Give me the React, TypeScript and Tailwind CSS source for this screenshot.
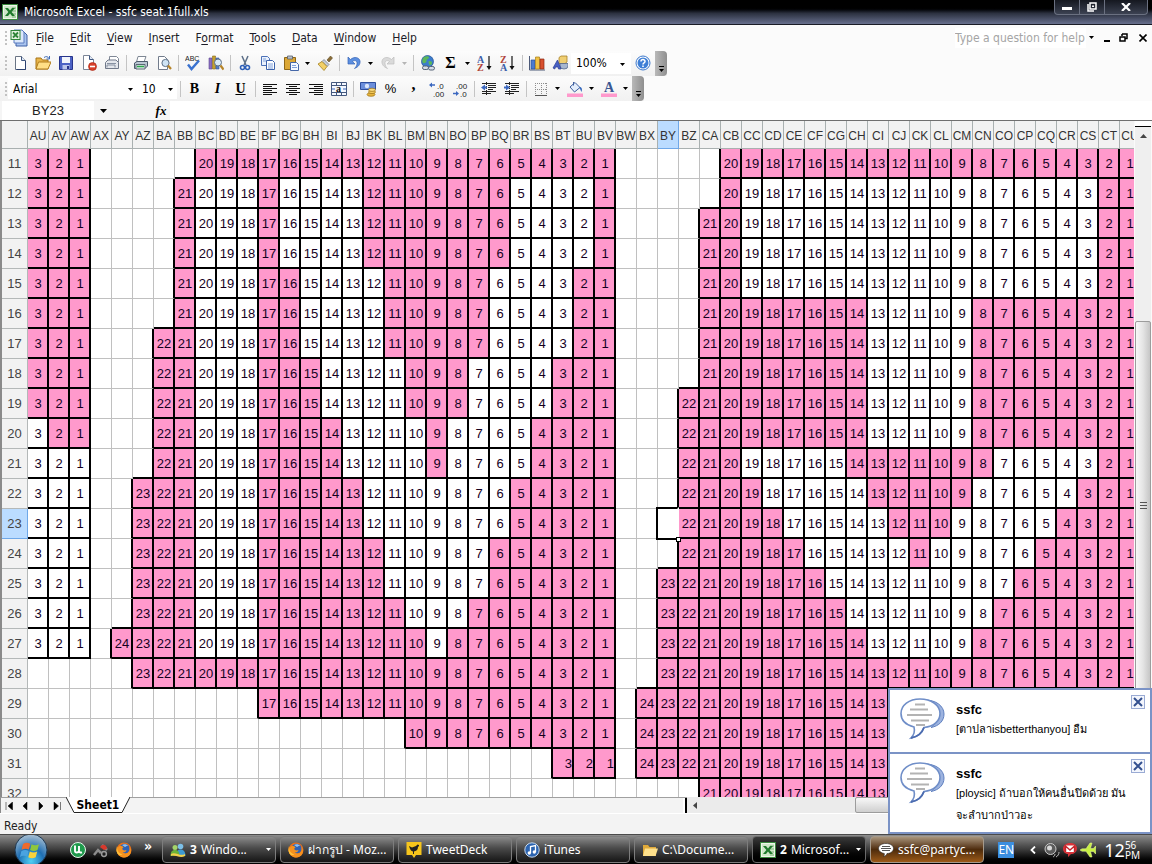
import type { ReactNode } from 'react';
import clsx from 'clsx';

const UI = "font-['DejaVu_Sans_Condensed','DejaVu_Sans','Noto_Sans',sans-serif]";

// ---------- sheet data ----------

const ALPHABET = 'ABCDEFGHIJKLMNOPQRSTUVWXYZ';

function columnName(n: number) {
  return ALPHABET[Math.floor(n / 26) - 1] + ALPHABET[n % 26];
}

// AU .. CU
const FIRST_COL = 46;
const COLUMNS = Array.from({ length: 53 }, (_, i) => columnName(FIRST_COL + i));

interface Block {
  max: number;
  free: [number, number][];
}

interface SeatRow {
  row: number;
  left: Block;
  middle: Block;
  right: Block;
}

const block = (max: number, ...free: [number, number][]): Block => ({ max, free });

const ROWS: SeatRow[] = [
  { row: 11, left: block(3), middle: block(20), right: block(20) },
  { row: 12, left: block(3), middle: block(21, [20, 18], [16, 13], [5, 2]), right: block(20, [19, 3]) },
  { row: 13, left: block(3), middle: block(21, [20, 18], [16, 13], [5, 2]), right: block(21, [19, 3]) },
  { row: 14, left: block(3), middle: block(21, [20, 18], [16, 13], [5, 2]), right: block(21, [19, 3]) },
  { row: 15, left: block(3), middle: block(21, [20, 18], [15, 12], [6, 3]), right: block(21, [19, 3]) },
  { row: 16, left: block(3), middle: block(21, [20, 18], [15, 12], [6, 3]), right: block(21, [13, 9]) },
  { row: 17, left: block(3), middle: block(22, [20, 18], [15, 12], [6, 3]), right: block(21, [13, 9]) },
  { row: 18, left: block(3), middle: block(22, [20, 18], [14, 11], [7, 4]), right: block(21, [13, 9]) },
  { row: 19, left: block(3), middle: block(22, [20, 18], [14, 11], [7, 4]), right: block(22, [13, 9]) },
  { row: 20, left: block(3, [3, 3]), middle: block(22, [20, 18], [13, 10], [8, 5]), right: block(22, [13, 9]) },
  { row: 21, left: block(3, [3, 1]), middle: block(22, [20, 18], [13, 10], [8, 5]), right: block(22, [19, 15], [7, 3]) },
  { row: 22, left: block(3, [3, 1]), middle: block(23, [20, 18], [12, 6]), right: block(22, [18, 14], [8, 4]) },
  { row: 23, left: block(3, [3, 1]), middle: block(23, [20, 18], [12, 6]), right: block(22, [17, 13], [9, 5]) },
  { row: 24, left: block(3, [3, 1]), middle: block(23, [20, 18], [11, 7]), right: block(22, [16, 12], [10, 6]) },
  { row: 25, left: block(3, [3, 1]), middle: block(23, [20, 18], [11, 7]), right: block(23, [15, 7]) },
  { row: 26, left: block(3, [3, 1]), middle: block(23, [20, 18], [10, 8]), right: block(23, [14, 8]) },
  { row: 27, left: block(3, [3, 1]), middle: block(24, [20, 18], [9, 9]), right: block(23, [13, 9]) },
  { row: 28, left: block(0), middle: block(23), right: block(23) },
  { row: 29, left: block(0), middle: block(17), right: block(24) },
  { row: 30, left: block(0), middle: block(10), right: block(24) },
  { row: 31, left: block(0), middle: block(3), right: block(24) },
  { row: 32, left: block(0), middle: block(0), right: block(21) },
];

interface Seat {
  n: number;
  taken: boolean;
}

// index of the column that holds seat 1 of each block
const LEFT_END = COLUMNS.indexOf('AW');
const MIDDLE_END = COLUMNS.indexOf('BV');
const RIGHT_END = COLUMNS.indexOf('CU');

function seatAt(r: number, c: number): Seat | null {
  const data = ROWS[r];
  if (!data || c < 0 || c > RIGHT_END) return null;
  const [b, end] =
    c <= LEFT_END ? [data.left, LEFT_END] : c <= MIDDLE_END ? [data.middle, MIDDLE_END] : [data.right, RIGHT_END];
  const n = end - c + 1;
  if (n > b.max) return null;
  return { n, taken: !b.free.some(([hi, lo]) => n <= hi && n >= lo) };
}

function Cell({ r, c }: { r: number; c: number }) {
  const seat = seatAt(r, c);
  const active = ROWS[r].row === 23 && COLUMNS[c] === 'BY';
  const thickRight = seat || seatAt(r, c + 1);
  const thickBottom = seat || seatAt(r + 1, c);
  return (
    <td
      className={clsx(
        'h-[30px] p-0 pt-0.5 align-middle text-[13px] leading-4 text-[#14001e]',
        thickRight ? 'border-r-2 border-r-black' : 'border-r border-r-[#c0c0c0]',
        thickBottom ? 'border-b-2 border-b-black' : 'border-b border-b-[#c0c0c0]',
        seat?.taken ? 'bg-[#ff99cc]' : 'bg-white',
        ROWS[r].row === 31 && c <= MIDDLE_END ? 'text-right' : 'text-center pl-px',
        active && 'relative'
      )}
    >
      {seat?.n}
      {active && (
        <span className="absolute -top-0.5 -left-0.5 -right-0.5 -bottom-0.5 border-2 border-black border-r-white">
          <span className="absolute -right-1 -bottom-1 w-[5px] h-[5px] bg-white border border-black" />
        </span>
      )}
    </td>
  );
}

function Sheet() {
  return (
    <div className="flex-1 min-w-0 overflow-hidden border-l-2 border-[#8a8a8a]">
      <table className="table-fixed border-separate border-spacing-0 w-[1139px] font-['Liberation_Sans',Arial,sans-serif]">
        <colgroup>
          <col className="w-[26px]" />
          {COLUMNS.map((name) => (
            <col key={name} className="w-[21px]" />
          ))}
        </colgroup>
        <thead>
          <tr>
            <th className="h-7 p-0 bg-[#f2f2f2] border-r border-b border-[#a9b0b0]" />
            {COLUMNS.map((name) => (
              <th
                key={name}
                scope="col"
                className={clsx(
                  'h-7 p-0 pt-0.5 text-xs font-normal text-[#333] text-center border-r border-b overflow-hidden whitespace-nowrap',
                  name === 'BY' ? 'bg-[#bbdcff] border-[#6fa8e8]' : 'bg-[#f2f2f2] border-[#a9b0b0]'
                )}
              >
                {name}
              </th>
            ))}
          </tr>
        </thead>
        <tbody>
          {ROWS.map(({ row }, r) => (
            <tr key={row}>
              <th
                scope="row"
                className={clsx(
                  'h-[30px] p-0 text-[13px] leading-4 font-normal text-[#444] text-center border-r border-b',
                  row === 23 ? 'bg-[#bbdcff] border-[#6fa8e8]' : 'bg-[#f2f2f2] border-[#b4b8b8]'
                )}
              >
                {row}
              </th>
              {COLUMNS.map((name, c) => (
                <Cell key={name} r={r} c={c} />
              ))}
            </tr>
          ))}
        </tbody>
      </table>
    </div>
  );
}

// ---------- small pieces ----------

function Svg({ children, className = 'w-4 h-4' }: { children: ReactNode; className?: string }) {
  return (
    <svg viewBox="0 0 16 16" className={className} fill="none" aria-hidden="true">
      {children}
    </svg>
  );
}

function Caret({ className = 'text-black' }: { className?: string }) {
  return (
    <svg viewBox="0 0 5 3" className={clsx('w-[5px] h-[3px] shrink-0', className)} aria-hidden="true">
      <path d="M0 0h5L2.5 3z" fill="currentColor" />
    </svg>
  );
}

function Tool({ label, children }: { label: string; children: ReactNode }) {
  return (
    <button type="button" aria-label={label} className="w-[23px] h-[23px] flex items-center justify-center shrink-0">
      {children}
    </button>
  );
}

function Drop({ label, off }: { label: string; off?: boolean }) {
  return (
    <button type="button" aria-label={label} className="w-[11px] h-[23px] flex items-center justify-center shrink-0">
      <Caret className={off ? 'text-[#b5b5b5]' : 'text-black'} />
    </button>
  );
}

function Sep() {
  return (
    <span className="w-1.5 flex justify-center shrink-0">
      <span className="w-px h-4 bg-[#c4c4c4]" />
    </span>
  );
}

function Grip() {
  return (
    <svg viewBox="0 0 8 16" className="w-2 h-4 shrink-0" aria-hidden="true">
      <path d="M5 1h2v2H5zM5 5h2v2H5zM5 9h2v2H5zM5 13h2v2H5z" fill="#c2c2c2" />
    </svg>
  );
}

function Overflow() {
  return (
    <button
      type="button"
      aria-label="Toolbar options"
      className="ml-px w-3 h-[25px] shrink-0 rounded-r-sm bg-gradient-to-r from-[#b9b9b9] to-[#8f8f8f] flex flex-col items-center justify-end gap-0.5 pb-1"
    >
      <span className="w-[5px] h-px bg-black" />
      <Caret />
    </button>
  );
}

function ExcelLogo({ className = 'w-4 h-4' }: { className?: string }) {
  return (
    <Svg className={className}>
      <rect x=".5" y=".5" width="15" height="15" fill="#eef6ea" stroke="#3b8a3e" />
      <path d="M2 2h12v12H2z" fill="#cfe6c8" />
      <path d="M10 4h4M10 7h4M10 10h4M10 13h4" stroke="#7cb47a" />
      <path d="M3 4h3l2 2.600L10 4h3L9.600 8l3.400 4h-3L8 9.500 6 12H3l3.400-4z" fill="#1f7a2c" />
    </Svg>
  );
}

function Firefox() {
  return (
    <Svg>
      <circle cx="8" cy="8" r="7.500" fill="#e8701a" />
      <circle cx="8.600" cy="6.800" r="5" fill="#2f62b4" />
      <path d="M6 3c2-1.500 5-1 6 1-1.500-.3-2 .5-3 1z" fill="#8fc0ee" />
      <path d="M1 4c0 1 .3 1 1 1.500C3 3.500 5 4 5 4c1 0 2 .5 2.500 1.500C6 6 6 7 7 8c1 .7 2.500.4 3.500 0-.5 2-2.500 2.800-4 2 1.500 2 5 2 6.500-.5 1-1.800.8-3.500 0-5 2 2 2.700 5 1.300 7.500C12.800 14.700 9.800 16 7 15.400 3 14.700.3 11 .6 7.500z" fill="#f5911e" />
      <path d="M1 4c-.2 4 1.500 7.500 5.500 8.500C3 14.500.5 11 .5 8z" fill="#fbc23c" />
    </Svg>
  );
}

// ---------- toolbars ----------

const MENUS = [
  ['', 'F', 'ile'],
  ['', 'E', 'dit'],
  ['', 'V', 'iew'],
  ['', 'I', 'nsert'],
  ['F', 'o', 'rmat'],
  ['', 'T', 'ools'],
  ['', 'D', 'ata'],
  ['', 'W', 'indow'],
  ['', 'H', 'elp'],
];

function TitleBar() {
  return (
    <header className="h-[25px] shrink-0 flex items-center pl-0.5 pr-1 bg-gradient-to-b from-black from-30% via-[#2b303f] via-55% to-[#68708e] border-b border-[#1a1c26]">
      <ExcelLogo />
      <h1 className="ml-1.5 text-xs leading-4 text-white whitespace-nowrap font-['DejaVu_Sans_Condensed','Noto_Sans',sans-serif]">
        Microsoft Excel - ssfc seat.1full.xls
      </h1>
      <div className="ml-auto self-start flex h-[15px] rounded-b border border-t-0 border-[#6a7080] divide-x divide-[#6a7080] bg-gradient-to-b from-[#151820] to-[#3c4252]">
        <button type="button" aria-label="Minimize" className="w-[25px] flex items-center justify-center">
          <svg viewBox="0 0 10 4" className="w-2.5 h-1 mt-1"><path d="M0 0h10v3H0z" fill="#fff" /></svg>
        </button>
        <button type="button" aria-label="Restore" className="w-[25px] flex items-center justify-center">
          <svg viewBox="0 0 10 10" className="w-2.5 h-2.5" fill="none">
            <path d="M3 1h6v6H3z" stroke="#fff" strokeWidth="1.500" />
            <path d="M5 3.500h2v1.500H5z" fill="#fff" />
            <path d="M1 2v7h6" stroke="#fff" strokeWidth="1.500" />
          </svg>
        </button>
        <button type="button" aria-label="Close" className="w-[42px] flex items-center justify-center">
          <svg viewBox="0 0 10 8" className="w-2.5 h-2"><path d="M1 0l8 8M9 0L1 8" stroke="#fff" strokeWidth="2.200" /></svg>
        </button>
      </div>
    </header>
  );
}

function MenuBar() {
  return (
    <nav className="h-[25px] shrink-0 flex items-center text-xs leading-4 text-[#1c1c28]">
      <Grip />
      <svg viewBox="0 0 18 18" className="w-[18px] h-[18px] ml-0.5" fill="none" aria-hidden="true">
        <path d="M6 3h8l3 3v11H6z" fill="#a9c3ee" stroke="#3c5fa5" />
        <path d="M4 1h8l2 2v11H4z" fill="#dce8fb" stroke="#5a7cc0" />
        <rect x="1" y="1.500" width="9" height="9" fill="#e6f3e0" stroke="#2f8537" />
        <path d="M3 3.500l5 5M8 3.500l-5 5" stroke="#2f8537" strokeWidth="1.800" />
      </svg>
      <div className="ml-2 flex gap-4">
        {MENUS.map(([pre, key, rest]) => (
          <button key={pre + key + rest} type="button">
            {pre}
            <u className="underline-offset-2">{key}</u>
            {rest}
          </button>
        ))}
      </div>
      <div className="ml-auto flex items-center pr-px">
        <input
          aria-label="Type a question for help"
          placeholder="Type a question for help"
          className="w-[131px] h-5 bg-white placeholder:text-[#a5a5a5] outline-none font-['DejaVu_Sans_Condensed','DejaVu_Sans',sans-serif]"
        />
        <Drop label="Recent questions" />
        <button type="button" aria-label="Minimize workbook" className="ml-0.5 w-4 h-4 flex items-end justify-center pb-1">
          <span className="w-1.5 h-0.5 bg-black" />
        </button>
        <button type="button" aria-label="Restore workbook" className="w-4 h-4 flex items-center justify-center">
          <svg viewBox="0 0 9 9" className="w-[9px] h-[9px]" fill="none">
            <path d="M3 1h5v4.500H6M3 1v2" stroke="#000" strokeWidth="1.500" />
            <path d="M1 4h5v4H1z" stroke="#000" strokeWidth="1.500" />
          </svg>
        </button>
        <button type="button" aria-label="Close workbook" className="ml-1 w-4 h-4 flex items-center justify-center">
          <svg viewBox="0 0 8 8" className="w-2 h-2"><path d="M.5.5l7 7M7.500.5l-7 7" stroke="#000" strokeWidth="1.600" /></svg>
        </button>
      </div>
    </nav>
  );
}

function StandardBar() {
  return (
    <div className="h-[26px] shrink-0 flex items-center">
      <div className="flex items-center bg-gradient-to-b from-[#fcfcfc] to-[#f1f1f1]">
        <Grip />
        <Tool label="New">
          <Svg>
            <path d="M3.500 1.500h6l4 4v9h-10z" fill="#fff" stroke="#6a7484" />
            <path d="M9.500 1.500v4h4" fill="#dfe8f6" stroke="#3f567f" />
            <path d="M13.500 6v8.500h-9" stroke="#2c4270" />
          </Svg>
        </Tool>
        <Tool label="Open">
          <Svg>
            <path d="M1 3h5l1.500 2H13v9H1z" fill="#e8b64c" stroke="#a87516" />
            <path d="M3.500 7H16l-3 7H1z" fill="#ffdf86" stroke="#b07d1c" />
            <path d="M9 2.500c2-1.500 4-1 5 1M14.500 1v3h-3" stroke="#3e6bb5" />
          </Svg>
        </Tool>
        <Tool label="Save">
          <Svg>
            <path d="M1.500 1.500h13v13h-13z" fill="#4c62c4" stroke="#27348b" />
            <path d="M4 2h8v6H4z" fill="#f1f4fb" />
            <path d="M4.500 10h7v4.500h-7z" fill="#bcc6ea" />
            <path d="M9 11h2v3H9z" fill="#27348b" />
          </Svg>
        </Tool>
        <Tool label="Permission">
          <Svg>
            <path d="M2.500.5h6l4 4v10h-10z" fill="#fff" stroke="#7b8596" />
            <path d="M8.500.5v4h4" stroke="#3f567f" fill="#dfe8f6" />
            <circle cx="11.500" cy="11.500" r="4" fill="#d8402a" stroke="#a4220f" strokeWidth=".6" />
            <path d="M9 11.500h5" stroke="#fff" strokeWidth="1.600" />
          </Svg>
        </Tool>
        <Tool label="E-mail">
          <Svg>
            <path d="M5.500 1.500h7l2 2V9h-9z" fill="#fff" stroke="#808896" />
            <path d="M1.500 7.500L4 5h8l2.500 2.500v6h-13z" fill="#e4e7ec" stroke="#70798a" />
            <path d="M3 8.500h9M3 12.500V10h8v2.500" stroke="#8791a2" />
          </Svg>
        </Tool>
        <Sep />
        <Tool label="Print">
          <Svg>
            <path d="M5 1.500h8L11 7H3.500z" fill="#fff" stroke="#7e8794" />
            <path d="M1.500 8L4 6.500h10.500V11L12 13.500H1.500z" fill="#bcc8d4" stroke="#4d5b6c" />
            <path d="M3 9.500h9v4.500H3z" fill="#e9f0f2" stroke="#5a6674" />
            <path d="M4 11.500h7" stroke="#2ba84a" strokeWidth="1.600" />
          </Svg>
        </Tool>
        <Tool label="Print preview">
          <Svg>
            <path d="M2.500 1.500h6l3 3v10h-9z" fill="#fff" stroke="#727c8c" />
            <circle cx="9.500" cy="8" r="3.600" fill="#cfe4f4" stroke="#5d7086" />
            <path d="M12 10.500l3 3.500" stroke="#b68428" strokeWidth="2.200" />
          </Svg>
        </Tool>
        <Sep />
        <Tool label="Spelling">
          <Svg>
            <text x="0" y="6" fontSize="7" fill="#222" fontFamily="Liberation Sans">ABC</text>
            <path d="M3 9.500l3.500 4.500L14 5.500" stroke="#3a72cf" strokeWidth="2.400" />
          </Svg>
        </Tool>
        <Tool label="Research">
          <Svg>
            <path d="M1 3h3v11H1z" fill="#8a6fc0" stroke="#5b4590" strokeWidth=".6" />
            <path d="M4.500 1h3v13h-3z" fill="#c4a02e" stroke="#86681a" strokeWidth=".6" />
            <path d="M8 3h3v11H8z" fill="#5880c8" stroke="#38559a" strokeWidth=".6" />
            <circle cx="10" cy="7.500" r="3.500" fill="#d8e9f6" stroke="#5d7086" />
            <path d="M12.500 10.500l3 4" stroke="#b68428" strokeWidth="2.200" />
          </Svg>
        </Tool>
        <Sep />
        <Tool label="Cut">
          <Svg>
            <path d="M5 1l4 9M11 1L7 10" stroke="#5c6f88" strokeWidth="1.500" />
            <circle cx="5.500" cy="12.500" r="2" stroke="#2d5fb8" strokeWidth="1.600" />
            <circle cx="10.500" cy="12.500" r="2" stroke="#2d5fb8" strokeWidth="1.600" />
          </Svg>
        </Tool>
        <Tool label="Copy">
          <Svg>
            <path d="M1.500 1.500h6l2 2v7h-8z" fill="#eaf1fc" stroke="#4c71b7" />
            <path d="M6.500 5.500h6l2 2v7h-8z" fill="#fff" stroke="#3c62ab" />
            <path d="M3 4h3M3 6h3M8 9h5M8 11h5M8 13h5" stroke="#7ea0dc" />
          </Svg>
        </Tool>
        <Tool label="Paste">
          <Svg>
            <path d="M1.500 2.500h11v12h-11z" fill="#dba736" stroke="#8e671a" />
            <path d="M4.500 1h5v3h-5z" fill="#b9c0ca" stroke="#59616c" strokeWidth=".8" />
            <path d="M7.500 7.500h6l2 2v6h-8z" fill="#f4f8ff" stroke="#4567a8" />
            <path d="M9 10.500h4M9 12.500h5" stroke="#7e9fda" />
          </Svg>
        </Tool>
        <Drop label="Paste options" />
        <Tool label="Format painter">
          <Svg>
            <path d="M10 5l3.500-4 2 2L12 7z" fill="#8a6d38" stroke="#5f4a22" strokeWidth=".6" />
            <path d="M7 4.500l5 5-2 2-5-5z" fill="#c5ccd6" stroke="#6c7684" strokeWidth=".7" />
            <path d="M5 6.500l5 5L7 15.500 1 9z" fill="#f2d067" stroke="#a58222" strokeWidth=".8" />
          </Svg>
        </Tool>
        <Sep />
        <Tool label="Undo">
          <Svg>
            <path d="M2 2v7h7L6.500 6.500C9 4.500 11.500 6 11 9c-.2 1.500-1 3-2.500 4.500 4-1.500 6-4.500 5.500-7.500C13.300 2.500 8.500 1 4.500 4.500z" fill="#5c8fe0" stroke="#3563b5" strokeWidth=".7" />
          </Svg>
        </Tool>
        <Drop label="Undo history" />
        <Tool label="Redo">
          <Svg>
            <path d="M14 2v7H7l2.500-2.500C7 4.500 4.500 6 5 9c.2 1.500 1 3 2.500 4.500C3.500 12 1.500 9 2 6c.7-3.500 5.500-5 9.500-1.500z" fill="#dadada" stroke="#bdbdbd" strokeWidth=".7" />
          </Svg>
        </Tool>
        <Drop label="Redo history" off />
        <Sep />
        <Tool label="Insert hyperlink">
          <Svg>
            <circle cx="7.500" cy="6.500" r="6" fill="#3b7ccd" stroke="#1f4f92" strokeWidth=".7" />
            <path d="M4 2c2-1 5-.8 5 .5S6 4.500 6.500 6 4 9 3 8 2 3.500 4 2zM9.500 6c2 0 3 1 2.500 2.500S9.500 11 9 9s-1-3 .5-3z" fill="#5cb85a" />
            <rect x="2.500" y="11" width="6" height="3.500" rx="1.700" fill="#d7dee8" stroke="#556377" />
            <rect x="8.500" y="11.500" width="6" height="3.500" rx="1.700" fill="#d7dee8" stroke="#556377" />
          </Svg>
        </Tool>
        <Tool label="AutoSum">
          <span className="text-base leading-4 font-bold font-['Liberation_Serif',serif]">Σ</span>
        </Tool>
        <Drop label="More functions" />
        <Tool label="Sort ascending">
          <Svg>
            <text x="0" y="7.500" fontSize="10" fontWeight="700" fill="#3c5ea8" fontFamily="Liberation Serif">A</text>
            <text x="0" y="15.500" fontSize="10" fontWeight="700" fill="#b0443a" fontFamily="Liberation Serif">Z</text>
            <path d="M12 1v12" stroke="#111" strokeWidth="1.200" />
            <path d="M9.500 11h5L12 15z" fill="#111" />
          </Svg>
        </Tool>
        <Tool label="Sort descending">
          <Svg>
            <text x="0" y="7.500" fontSize="10" fontWeight="700" fill="#b0443a" fontFamily="Liberation Serif">Z</text>
            <text x="0" y="15.500" fontSize="10" fontWeight="700" fill="#3c5ea8" fontFamily="Liberation Serif">A</text>
            <path d="M12 1v12" stroke="#111" strokeWidth="1.200" />
            <path d="M9.500 11h5L12 15z" fill="#111" />
          </Svg>
        </Tool>
        <Sep />
        <Tool label="Chart wizard">
          <Svg>
            <path d="M.5 1v14H16" stroke="#4d5a78" />
            <path d="M2 5h4v9H2z" fill="#4a7bd0" stroke="#2a4d92" strokeWidth=".7" />
            <path d="M6.500 2h4v12h-4z" fill="#f0c243" stroke="#a87d12" strokeWidth=".7" />
            <path d="M11 4h4v10h-4z" fill="#d8502e" stroke="#8e2a12" strokeWidth=".7" />
          </Svg>
        </Tool>
        <Tool label="Drawing">
          <Svg>
            <path d="M7 2.500L9 1h6v6l-2 1.500H7z" fill="#f0cf72" stroke="#a78129" strokeWidth=".8" />
            <path d="M8 11a4 3 0 108 0V8.500H8z" fill="#a7b6cf" stroke="#56688a" strokeWidth=".8" />
            <path d="M1 13L5.500 5 9 14H6.500L6 12H3.500L2.800 14z" fill="#4960c4" stroke="#2b3d90" strokeWidth=".7" />
          </Svg>
        </Tool>
        <label className="w-[60px] h-[21px] bg-white flex items-center relative">
          <select
            aria-label="Zoom"
            className="appearance-none w-full pl-[5px] text-xs leading-4 font-['DejaVu_Sans_Condensed','DejaVu_Sans',sans-serif] outline-none bg-transparent"
            defaultValue="100%"
          >
            <option>100%</option>
            <option>75%</option>
          </select>
          <span className="absolute right-1.5 top-2.5 pointer-events-none">
            <Caret />
          </span>
        </label>
        <Tool label="Help">
          <Svg>
            <circle cx="8" cy="8" r="7" fill="#fff" stroke="#3c78cc" />
            <circle cx="8" cy="8" r="5.500" fill="#3f7fd6" />
            <path d="M6 6.500C6 4 10 4 10 6.400 10 8 8 7.800 8 9.500" stroke="#fff" strokeWidth="1.500" />
            <path d="M7.200 10.500h1.600V12H7.200z" fill="#fff" />
          </Svg>
        </Tool>
        <Overflow />
      </div>
    </div>
  );
}

function FormattingBar() {
  return (
    <div className="h-[25px] shrink-0 flex items-center">
      <div className="flex items-center bg-gradient-to-b from-[#fcfcfc] to-[#f1f1f1]">
        <Grip />
        <label className="w-[129px] h-[21px] bg-white flex items-center relative">
          <select
            aria-label="Font"
            defaultValue="Arial"
            className="appearance-none w-full pl-[5px] text-xs leading-4 outline-none bg-transparent"
          >
            <option>Arial</option>
            <option>Tahoma</option>
          </select>
          <span className="absolute right-1 top-2.5 pointer-events-none">
            <Caret />
          </span>
        </label>
        <label className="w-10 h-[21px] bg-white flex items-center relative">
          <select
            aria-label="Font size"
            defaultValue="10"
            className="appearance-none w-full pl-[5px] text-xs leading-4 font-['DejaVu_Sans_Condensed','DejaVu_Sans',sans-serif] outline-none bg-transparent"
          >
            <option>10</option>
            <option>12</option>
          </select>
          <span className="absolute right-1 top-2.5 pointer-events-none">
            <Caret />
          </span>
        </label>
        <Sep />
        <Tool label="Bold">
          <b className="text-sm leading-4 font-['Liberation_Serif',serif]">B</b>
        </Tool>
        <Tool label="Italic">
          <i className="text-sm leading-4 font-bold font-['Liberation_Serif',serif]">I</i>
        </Tool>
        <Tool label="Underline">
          <u className="text-sm leading-4 font-bold underline-offset-1 font-['Liberation_Serif',serif]">U</u>
        </Tool>
        <Sep />
        <Tool label="Align left">
          <Svg><path d="M1 3.500h14M1 5.500h9M1 7.500h14M1 9.500h9M1 11.500h14M1 13.500h9" stroke="#111" /></Svg>
        </Tool>
        <Tool label="Center">
          <Svg><path d="M1 3.500h14M4 5.500h8M1 7.500h14M4 9.500h8M1 11.500h14M4 13.500h8" stroke="#111" /></Svg>
        </Tool>
        <Tool label="Align right">
          <Svg><path d="M1 3.500h14M6 5.500h9M1 7.500h14M6 9.500h9M1 11.500h14M6 13.500h9" stroke="#111" /></Svg>
        </Tool>
        <Tool label="Merge and center">
          <Svg>
            <path d="M.5 1.500h15v13H.5zM.5 4.500h15M.5 11.500h15M5.500 1.500v3M10.500 1.500v3M5.500 11.500v3M10.500 11.500v3" stroke="#44597f" fill="#f4f8ff" />
            <path d="M1 8h3M12 8h3" stroke="#3c68c0" />
            <text x="5" y="10.500" fontSize="10" fontWeight="700" fill="#111" fontFamily="Liberation Serif">a</text>
          </Svg>
        </Tool>
        <Sep />
        <Tool label="Currency">
          <Svg>
            <path d="M.5 1.500h15v7H.5z" fill="#6b8edb" stroke="#2f4f9e" />
            <circle cx="7" cy="5" r="2.200" fill="#dbe6fb" />
            <ellipse cx="11" cy="13.500" rx="4" ry="1.800" fill="#e8b53c" stroke="#9a6f12" strokeWidth=".7" />
            <ellipse cx="12" cy="11" rx="3.500" ry="1.600" fill="#f4cb5e" stroke="#9a6f12" strokeWidth=".7" />
            <ellipse cx="12" cy="8.800" rx="3.500" ry="1.600" fill="#fbdc7f" stroke="#9a6f12" strokeWidth=".7" />
          </Svg>
        </Tool>
        <Tool label="Percent">
          <span className="text-[13px] leading-4 font-['Liberation_Sans',sans-serif]">%</span>
        </Tool>
        <Tool label="Comma">
          <span className="pb-2 text-base leading-4 font-bold font-['Liberation_Serif',serif]">,</span>
        </Tool>
        <Tool label="Increase decimal">
          <Svg>
            <path d="M0 4l3-2.500V3.300h3v1.400H3v1.800z" fill="#3c68c0" />
            <text x="8" y="7.500" fontSize="8" fill="#222" fontFamily="Liberation Sans">.0</text>
            <text x="4" y="15.500" fontSize="8" fill="#222" fontFamily="Liberation Sans">.00</text>
          </Svg>
        </Tool>
        <Tool label="Decrease decimal">
          <Svg>
            <text x="4" y="7.500" fontSize="8" fill="#222" fontFamily="Liberation Sans">.00</text>
            <path d="M7 12.500L4 10v1.800H1v1.400h3V15z" fill="#3c68c0" />
            <text x="8" y="15.500" fontSize="8" fill="#222" fontFamily="Liberation Sans">.0</text>
          </Svg>
        </Tool>
        <Sep />
        <Tool label="Decrease indent">
          <Svg>
            <path d="M1 2.500h14M7 4.500h8M7 6.500h8M7 8.500h5M1 10.500h14M1 12.500h9" stroke="#222" />
            <path d="M5.500 1v14" stroke="#222" strokeDasharray="1 1" />
            <path d="M0 6.500L4 3.500v2h2v2H4v2z" fill="#3c68c0" />
          </Svg>
        </Tool>
        <Tool label="Increase indent">
          <Svg>
            <path d="M1 2.500h14M7 4.500h8M7 6.500h8M7 8.500h5M1 10.500h14M1 12.500h9" stroke="#222" />
            <path d="M5.500 1v14" stroke="#222" strokeDasharray="1 1" />
            <path d="M6 6.500L2 3.500v2H0v2h2v2z" fill="#3c68c0" />
          </Svg>
        </Tool>
        <Sep />
        <Tool label="Borders">
          <Svg>
            <path d="M2 2.500h12M2 8.500h12M2.500 2v12M8.500 2v12M13.500 2v12" stroke="#8d8d8d" strokeDasharray="1 1" />
            <path d="M2 14.500h12" stroke="#555" />
          </Svg>
        </Tool>
        <Drop label="Border styles" />
        <Tool label="Fill color">
          <Svg>
            <path d="M3 6l5-4.500 5 5L7.500 11z" fill="#e3edfb" stroke="#3f5f9e" />
            <path d="M6.500 4.500V1" stroke="#3f5f9e" />
            <path d="M12 6c3 0 3.500 2 2.500 5-1-1.500-1-3-2.500-5z" fill="#3568bd" />
            <path d="M0 12.500h16V16H0z" fill="#ff99cc" />
          </Svg>
        </Tool>
        <Drop label="Fill colors" />
        <Tool label="Font color">
          <Svg>
            <text x="3" y="11" fontSize="14" fontWeight="700" fill="#3a5793" fontFamily="Liberation Serif">A</text>
            <path d="M0 12.500h16V16H0z" fill="#ff99cc" />
          </Svg>
        </Tool>
        <Drop label="Font colors" />
        <Overflow />
      </div>
    </div>
  );
}

function FormulaBar() {
  return (
    <div className="h-[19px] shrink-0 flex items-center bg-[#f5f5f5] font-['Liberation_Sans',Arial,sans-serif]">
      <input
        aria-label="Name box"
        defaultValue="BY23"
        className="ml-0.5 w-[92px] h-full bg-white text-center text-[13px] leading-4 text-[#222] outline-none"
      />
      <button type="button" aria-label="Names" className="w-[18px] h-full flex items-center justify-center">
        <svg viewBox="0 0 7 4" className="w-[7px] h-1"><path d="M0 0h7L3.500 4z" fill="#000" /></svg>
      </button>
      <button
        type="button"
        aria-label="Insert function"
        className="ml-10 w-[18px] text-[13px] leading-4 italic font-bold font-['Liberation_Serif',serif]"
      >
        fx
      </button>
      <input aria-label="Formula" className="flex-1 min-w-0 h-full bg-white outline-none text-[13px]" />
    </div>
  );
}

// ---------- scroll bars and tabs ----------

function VerticalScroll() {
  return (
    <div className="w-[18px] shrink-0 flex flex-col bg-[#efefef] border-x border-[#fafafa]">
      <span className="h-1.5 shrink-0 bg-white border-b border-black" />
      <button type="button" aria-label="Scroll up" className="h-[17px] shrink-0 flex items-center justify-center">
        <svg viewBox="0 0 7 4" className="w-[7px] h-1"><path d="M0 4h7L3.500 0z" fill="#444" /></svg>
      </button>
      <div className="grow-[178] basis-0" />
      <div className="grow-[370] basis-0 flex items-center justify-center rounded-xs border border-[#9c9c9c] bg-gradient-to-r from-[#f8f8f8] via-[#e4e4e4] to-[#c6c6c6]">
        <svg viewBox="0 0 7 8" className="w-[7px] h-2"><path d="M0 .5h7M0 3.500h7M0 6.500h7" stroke="#555" /></svg>
      </div>
      <div className="grow-[90] basis-0" />
      <span className="h-[17px] shrink-0" />
    </div>
  );
}

const NAV = [
  { label: 'First sheet', d: 'M1 0v8M7.500 0L3 4l4.500 4z' },
  { label: 'Previous sheet', d: 'M6 0L2 4l4 4z' },
  { label: 'Next sheet', d: 'M2 0l4 4-4 4z' },
  { label: 'Last sheet', d: 'M7.500 0v8M1 0l4.500 4L1 8z' },
];

function TabRow() {
  return (
    <div className="h-4 shrink-0 flex bg-[#f3f3f3]">
      <div className="grow-[687] basis-0 flex items-stretch border-l border-[#8a8a8a] border-t border-t-[#a0a0a0]">
        {NAV.map(({ label, d }) => (
          <button key={label} type="button" aria-label={label} className="w-4 flex items-center justify-center">
            <svg viewBox="0 0 8 8" className="w-2 h-2"><path d={d} fill="#000" stroke="#000" strokeWidth=".5" /></svg>
          </button>
        ))}
        <div className="relative w-[64px] -mt-px ml-px flex items-center">
          <svg viewBox="0 0 64 16" className="absolute inset-0 w-16 h-4" aria-hidden="true">
            <path d="M0 0h64l-8 15.500H8z" fill="#fff" />
            <path d="M0 0l8 15.500h48L64 0" fill="none" stroke="#222" />
          </svg>
          <button type="button" className="relative w-full text-center text-xs leading-4 font-bold text-black">
            Sheet1
          </button>
        </div>
        <span className="ml-auto w-1 border-r-2 border-black bg-white" />
      </div>
      <div className="grow-[465] basis-0 flex bg-[#ebebeb]">
        <button type="button" aria-label="Scroll left" className="w-4 flex items-center justify-center">
          <svg viewBox="0 0 4 7" className="w-1 h-[7px]"><path d="M4 0v7L0 3.500z" fill="#444" /></svg>
        </button>
        <div className="grow-[152] basis-0" />
        <div className="grow-[200] basis-0 rounded-xs border border-[#9c9c9c] bg-gradient-to-b from-[#f8f8f8] to-[#cfcfcf]" />
        <div className="grow-[97] basis-0" />
      </div>
    </div>
  );
}

// ---------- chat popups ----------

const POPUPS = [
  { title: 'ssfc', lines: ['[ตาปลาisbetterthanyou] อืม'], box: 'h-[64px]' },
  { title: 'ssfc', lines: ['[ploysic] ถ้าบอกให้คนอื่นปิดด้วย มัน', 'จะลำบากป่าวอะ'], box: 'h-[78px]' },
];

function Bubble() {
  return (
    <svg viewBox="0 0 46 42" className="w-[46px] h-[42px] shrink-0" fill="none" aria-hidden="true">
      <path d="M25 2c11 0 19 6 19 14 0 7-5 12-13 13.500 7-4 9-20-6-27.500z" fill="#9db3df" stroke="#5f80c0" />
      <path d="M20 1C9 1 1 7 1 15.500 1 22 6 27 14 29c1 4 0 8-3 11 6-1 11-5 13-10.500 10-1 16-6.500 16-14C40 7 31 1 20 1z" fill="#fff" stroke="#6f8ec8" strokeWidth="1.600" />
      <path d="M15 6.500h10M10 11.500h18M7 17h25M11 22.500h18M16 27h9" stroke="#b3b3b3" strokeWidth="1.800" />
      <path d="M11 40c6-1 11-5 13-10.500" stroke="#4c6cb0" strokeWidth="1.800" />
    </svg>
  );
}

function Popups() {
  return (
    <aside className="absolute right-0 bottom-[30px] w-[264px] border-2 border-[#7b93c6] bg-white divide-y-2 divide-[#7b93c6]">
      {POPUPS.map(({ title, lines, box }) => (
        <section key={lines[0]} className={clsx('relative flex pl-2.5 pt-2', box)}>
          <Bubble />
          <div className="ml-2.5 pt-1 text-black">
            <h2 className="text-[13px] leading-4 font-bold font-['Liberation_Sans',sans-serif]">{title}</h2>
            {lines.map((line) => (
              <p key={line} className="text-[11px] leading-[22px] whitespace-nowrap font-['Liberation_Sans',sans-serif]">
                {line}
              </p>
            ))}
          </div>
          <button
            type="button"
            aria-label="Close message"
            className="absolute top-[5px] right-[5px] w-3.5 h-3.5 flex items-center justify-center border border-[#9aabd4] bg-[#f3f6fd]"
          >
            <svg viewBox="0 0 10 10" className="w-2.5 h-2.5"><path d="M1 1l8 8M9 1L1 9" stroke="#33508f" strokeWidth="2" /></svg>
          </button>
        </section>
      ))}
    </aside>
  );
}

// ---------- taskbar ----------

interface Task {
  label: string;
  count?: string;
  icon: ReactNode;
  tone?: 'active' | 'alert';
}

const TASKS: Task[] = [
  {
    label: 'Windo...',
    count: '3',
    icon: (
      <Svg>
        <circle cx="10.500" cy="4.500" r="2.800" fill="#7cc0e8" />
        <path d="M6 14c0-5 2-6.500 4.500-6.500S15.500 9 15.500 14z" fill="#3d9ad2" />
        <circle cx="5" cy="5.500" r="2.500" fill="#a4d46a" />
        <path d="M.5 14c0-4.500 2-6 4.500-6s4.500 1.500 4.500 6z" fill="#6cb33a" />
        <path d="M1 12c4-3 9 3 14 0v2c-5 3-10-2-14 0z" fill="#f3d04c" />
      </Svg>
    ),
  },
  { label: 'ฝากรูป - Moz...', icon: <Firefox /> },
  {
    label: 'TweetDeck',
    icon: (
      <Svg>
        <path d="M.5 0h15v13H10l-2 3-2-3H.5z" fill="#f6c51c" />
        <path d="M3 4l3 1.500L10 4l1.500-1.500L13 3v1l-1 1c0 3-2 4-4 4.500V12H7V9.500C5 9 4 7.500 3 4z" fill="#222" />
      </Svg>
    ),
  },
  {
    label: 'iTunes',
    icon: (
      <Svg>
        <circle cx="8" cy="8" r="7.200" fill="#2c64b0" stroke="#c5d8ee" />
        <path d="M6.500 11V4.500l5-1V10" stroke="#fff" strokeWidth="1.300" />
        <circle cx="5.300" cy="11" r="1.700" fill="#fff" />
        <circle cx="10.300" cy="10" r="1.700" fill="#fff" />
      </Svg>
    ),
  },
  {
    label: 'C:\\Docume...',
    icon: (
      <Svg>
        <path d="M1 3h5l1.500 2H14v9H1z" fill="#dfa93a" />
        <path d="M3 6.500h13L13.500 14H1z" fill="#ffe18c" />
      </Svg>
    ),
  },
  { label: 'Microsof...', count: '2', icon: <ExcelLogo />, tone: 'active' },
  {
    label: 'ssfc@partyc...',
    tone: 'alert',
    icon: (
      <Svg>
        <path d="M8 1.500c4.500 0 7.500 2.200 7.500 5S12.500 11.500 9 11.500c-.5 1.500-1.500 2.500-3.500 3 .8-1 1-2 .8-3C3 11 .5 9 .5 6.500c0-2.800 3-5 7.500-5z" fill="#fff" stroke="#222" strokeWidth=".6" />
        <path d="M4 4.500h8M3 6.500h10M4 8.500h8" stroke="#555" />
      </Svg>
    ),
  },
];

function Taskbar() {
  return (
    <footer className="h-[30px] shrink-0 flex items-center bg-gradient-to-b from-[#8e8e8e] via-[#3c3c3c] via-50% to-black border-t border-[#4a4a4a] text-white">
      <button type="button" aria-label="Start" className="ml-3.5 w-9 h-full overflow-hidden">
        <svg viewBox="0 0 34 34" className="w-[34px] h-[34px] -mt-0.5">
          <defs>
            <radialGradient id="orb" cx=".5" cy=".85" r=".8">
              <stop offset="0" stopColor="#4fd0f4" />
              <stop offset=".5" stopColor="#1f6fb4" />
              <stop offset="1" stopColor="#9fb9cf" />
            </radialGradient>
          </defs>
          <circle cx="17" cy="17" r="16" fill="url(#orb)" stroke="#1c3650" />
          <path d="M9 11c2.500-1.600 5-1.600 7.300-.2l-1.400 5.800c-2.300-1.300-4.700-1.300-7.300.2z" fill="#ee6a2c" />
          <path d="M17.500 11.300c2.500 1.300 5 1.300 7.500 0l-1.500 5.800c-2.400 1.300-4.900 1.300-7.400 0z" fill="#8fc63d" />
          <path d="M7.300 18.200c2.500-1.500 5-1.500 7.300-.2l-1.500 5.800c-2.300-1.300-4.700-1.300-7.200.2z" fill="#4aa3e0" />
          <path d="M15.800 18.500c2.500 1.300 5 1.300 7.400 0l-1.500 5.800c-2.400 1.300-4.900 1.300-7.400 0z" fill="#fbd23a" />
        </svg>
      </button>
      <div className="ml-5 flex items-center gap-[7px]">
        <button type="button" aria-label="uTorrent">
          <Svg>
            <circle cx="8" cy="8" r="7.500" fill="#1f9a4c" stroke="#e8f6ec" />
            <path d="M5 3.500V9c0 2 3.500 2 4 0V4M9 9c.3 1.500 1.500 1.800 3 1.300" stroke="#fff" strokeWidth="1.900" />
          </Svg>
        </button>
        <button type="button" aria-label="Media tool">
          <Svg>
            <path d="M1 13l4-5 3 3M9 3l5 5" stroke="#8c8c8c" strokeWidth="2.500" />
            <path d="M7 5c3-4 7-2 7 2l-3 1z" fill="#d8382c" />
            <circle cx="11" cy="12" r="2.400" stroke="#9a9a9a" strokeWidth="1.500" />
          </Svg>
        </button>
        <button type="button" aria-label="Firefox">
          <Firefox />
        </button>
      </div>
      <button type="button" aria-label="More" className="ml-2.5 w-3 pb-2 text-sm leading-4 font-bold">
        »
      </button>
      <div className="ml-2 flex gap-1">
        {TASKS.map(({ label, count, icon, tone }) => (
          <button
            key={label}
            type="button"
            className={clsx(
              'w-[114px] h-[27px] flex items-center rounded-sm border pl-[7px] pr-1 text-left text-xs leading-4 whitespace-nowrap bg-gradient-to-b',
              !tone && 'border-[#7d7d7d] from-[#8b8b8b] via-[#4a4a4a] via-45% to-[#161616]',
              tone === 'active' && 'border-[#6a6a6a] from-[#3a3a3a] via-[#161616] via-45% to-black',
              tone === 'alert' && 'border-[#a59a8c] from-[#a8957c] via-[#4e2c0c] via-50% to-[#9c5a18]'
            )}
          >
            {icon}
            <span className="ml-1 flex-1 font-['Noto_Sans','Open_Sans',sans-serif]">
              {count && <b className="mr-1">{count}</b>}
              {label}
            </span>
            {count && <Caret className="text-white" />}
          </button>
        ))}
      </div>
      <div className="ml-auto pr-3 flex items-center">
        <button type="button" className="w-4 h-4 bg-[#3b8ee0] text-xs leading-4 font-['Noto_Sans',sans-serif]">
          EN
        </button>
        <button type="button" aria-label="Show hidden icons" className="ml-4 w-2 h-4 flex items-center">
          <svg viewBox="0 0 6 8" className="w-1.5 h-2" fill="none"><path d="M5 .5L1.500 4 5 7.500" stroke="#fff" strokeWidth="1.800" /></svg>
        </button>
        <div className="ml-1.5 flex gap-0.5">
          <Svg>
            <circle cx="6.500" cy="7" r="5.500" fill="#5b5b5b" stroke="#c9c9c9" />
            <circle cx="5.500" cy="6" r="2.500" fill="#d8d8d8" />
            <path d="M12 15c2-1 3-3 3-5M9 15c1-.5 2-1.500 2-3" stroke="#b9b9b9" />
          </Svg>
          <Svg>
            <path d="M8 1c4 0 7 2 7 5.500S12 12 9 12l-3 3v-3C3 12 1 9.500 1 6.500S4 1 8 1z" fill="#d8343a" />
            <path d="M3.500 3.500h9v6.500h-9z" fill="#fff" />
            <path d="M3.500 10V4L8 8l4.500-4v6" stroke="#c4262c" strokeWidth="1.400" />
          </Svg>
          <Svg>
            <path d="M0 8l2-1.200h4L10 1h2L10.500 6.500h3L15 4.500h1L15.500 8l.5 3.500h-1l-1.500-2h-3L12 15h-2L6 9.200H2z" fill="#c8f044" stroke="#eaff9c" strokeWidth=".5" />
          </Svg>
        </div>
        <time className="ml-2 flex items-center font-['Noto_Sans','Open_Sans',sans-serif]">
          <span className="text-lg leading-5">12</span>
          <span className="flex flex-col text-[10px] leading-[10px]">
            <span>56</span>
            <span>PM</span>
          </span>
        </time>
      </div>
    </footer>
  );
}

export default function App() {
  return (
    <div className={clsx('relative h-screen flex flex-col overflow-hidden bg-[#fbfbfb]', UI)}>
      <TitleBar />
      <MenuBar />
      <StandardBar />
      <FormattingBar />
      <FormulaBar />
      <main className="flex-1 min-h-0 flex border-t border-[#6f6f6f] bg-white">
        <Sheet />
        <VerticalScroll />
      </main>
      <TabRow />
      <div className="h-[21px] shrink-0 flex items-center pl-1 pt-1 border-t border-white bg-[#f3f3f3] text-xs leading-4 text-[#222]">
        Ready
      </div>
      <Taskbar />
      <Popups />
    </div>
  );
}
